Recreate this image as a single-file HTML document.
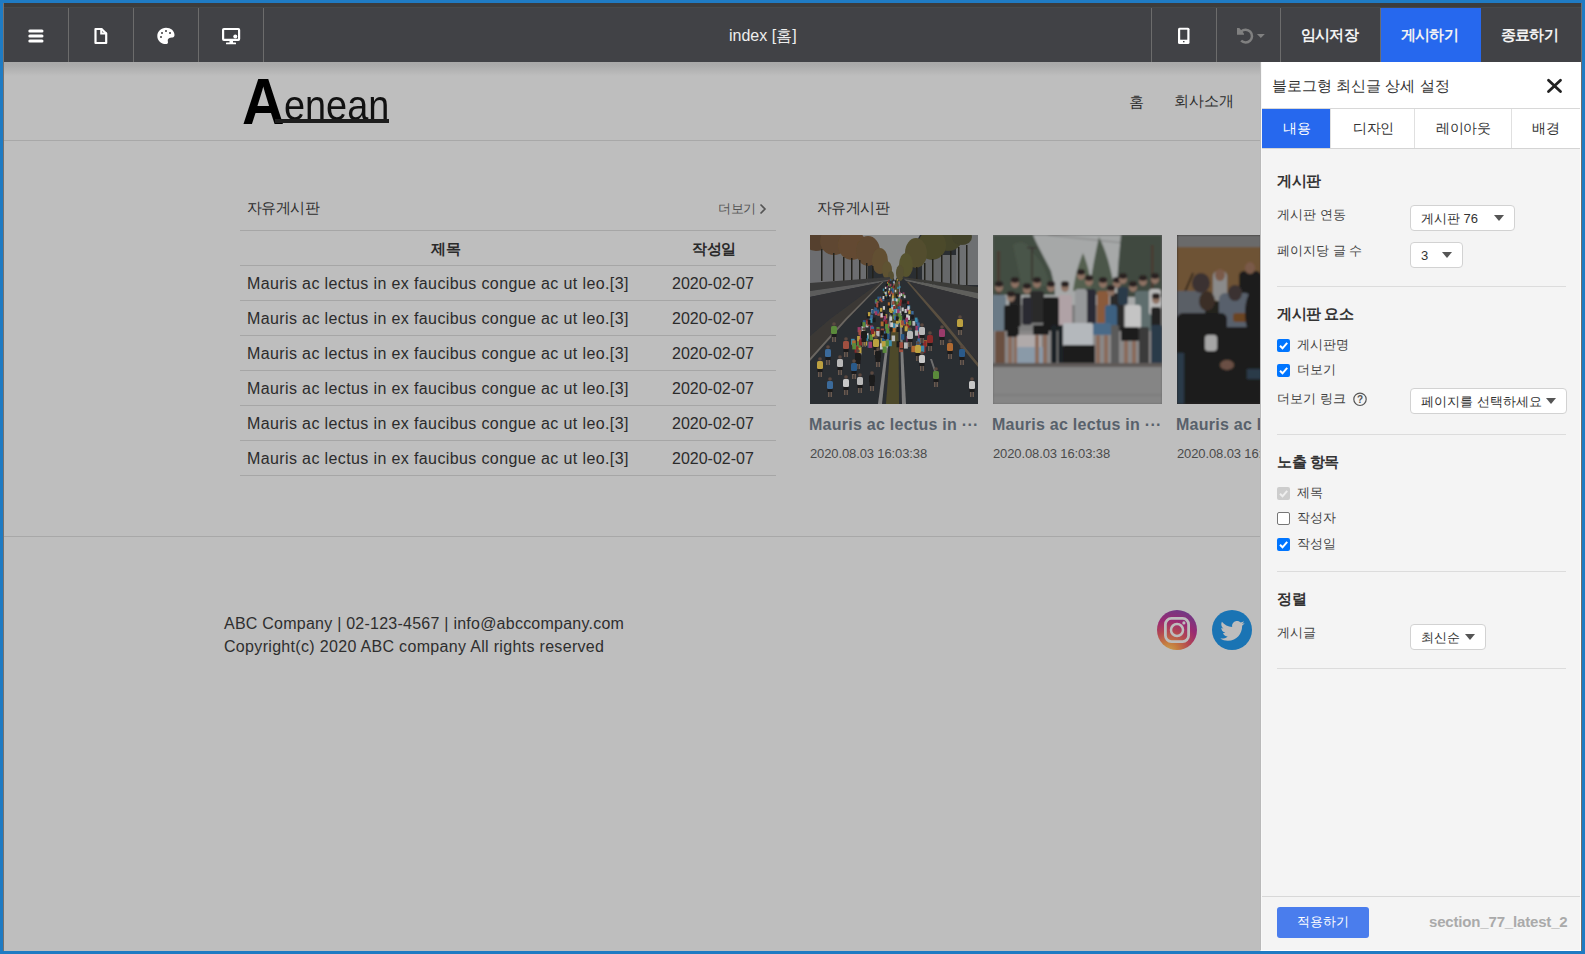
<!DOCTYPE html>
<html><head><meta charset="utf-8">
<style>
*{margin:0;padding:0;box-sizing:border-box}
html,body{width:1585px;height:954px;overflow:hidden;background:#1f7bc3;font-family:"Liberation Sans",sans-serif}
.a{position:absolute}
.dv{position:absolute;top:8px;width:1px;height:54px;background:#6c6c6c}
.hb{position:absolute;top:8px;height:54px;color:#f2f2f2;font-size:15px;font-weight:bold;line-height:54px;text-align:center;letter-spacing:-0.8px}
.t{position:absolute;white-space:nowrap;line-height:1}
.ln{position:absolute;height:1px;background:#a6a6a6}
.row{position:absolute;left:247px;letter-spacing:0.38px;font-size:16px;color:#2b2b2b;white-space:nowrap;line-height:1}
.dt{position:absolute;left:672px;font-size:16px;color:#2b2b2b;white-space:nowrap;line-height:1}
.pl{position:absolute;height:1px;background:#dcdcdc;left:1277px;width:289px}
.ph{position:absolute;left:1277px;letter-spacing:-0.5px;font-size:15px;font-weight:bold;color:#333;line-height:1;white-space:nowrap}
.lb{position:absolute;font-size:13px;color:#444;line-height:1;white-space:nowrap}
.sel{position:absolute;background:#fff;border:1px solid #d2d2d2;border-radius:4px;font-size:13px;color:#333;line-height:1;white-space:nowrap}
.sel span{position:absolute;left:10px;top:6px}
.arr{position:absolute;width:0;height:0;border-left:5px solid transparent;border-right:5px solid transparent;border-top:6px solid #555}
.cb{position:absolute;width:13px;height:13px;border-radius:2px;background:#0075ff}
.cb svg{position:absolute;left:0;top:0}
</style></head>
<body>
<!-- top strip -->
<div class="a" style="left:3px;top:3px;width:1578px;height:4px;background:#3c3c3c"></div>
<div class="a" style="left:3px;top:7px;width:1578px;height:1px;background:#474948"></div>
<div class="a" style="left:3px;top:8px;width:1578px;height:54px;background:#414246"></div>
<div class="dv" style="left:68px"></div>
<div class="dv" style="left:133px"></div>
<div class="dv" style="left:198px"></div>
<div class="dv" style="left:263px"></div>
<div class="dv" style="left:1151px"></div>
<div class="dv" style="left:1216px"></div>
<div class="dv" style="left:1280px"></div>
<div class="dv" style="left:1380px"></div>
<div class="a" style="left:1381px;top:8px;width:100px;height:54px;background:#2668ee"></div>
<div class="hb" style="left:1279.5px;width:100px">임시저장</div>
<div class="hb" style="left:1379.5px;width:100px">게시하기</div>
<div class="hb" style="left:1479.5px;width:100px">종료하기</div>
<div class="t" style="left:729px;top:28px;font-size:16px;color:#eee;letter-spacing:0px">index [홈]</div>
<!-- header icons -->
<svg class="a" style="left:0;top:0" width="300" height="62">
  <g stroke="#fff" stroke-width="3" stroke-linecap="round">
    <line x1="29.8" y1="30.9" x2="42" y2="30.9"/>
    <line x1="29.8" y1="36" x2="42" y2="36"/>
    <line x1="29.8" y1="40.9" x2="42" y2="40.9"/>
  </g>
  <path d="M95.5,29 H101.5 L106.2,33.5 V43 H95.5 Z" fill="none" stroke="#fff" stroke-width="2.2" stroke-linejoin="round"/>
  <path d="M101.2,28 V33.6 H107" fill="none" stroke="#fff" stroke-width="2"/>
  <path d="M166,27.8 C171,27.8 174.5,31 174.5,35 C174.5,38 171,37.5 169.5,38 C167,39 168,41 168,42.2 C168,43.5 167,44.1 165.8,44.1 C161,44.1 157.3,40.5 157.3,36 C157.3,31.5 161,27.8 166,27.8 Z" fill="#fff"/>
  <g fill="#6e6e70"><rect x="165" y="30" width="2" height="2"/><rect x="161" y="32" width="2" height="2"/><rect x="169" y="32" width="2" height="2"/><rect x="160" y="36" width="2" height="2"/></g>
  <rect x="223.1" y="29" width="16" height="10.8" rx="0.8" fill="none" stroke="#fff" stroke-width="2.2"/>
  <rect x="229.5" y="40.5" width="3.5" height="2.5" fill="#fff"/>
  <rect x="226" y="42.4" width="10" height="1.8" rx="0.5" fill="#fff"/>
  <circle cx="235.3" cy="36.4" r="2" fill="#fff"/>
</svg>
<svg class="a" style="left:1170px;top:20px" width="110" height="32">
  <rect x="8" y="7.7" width="11.5" height="16.3" rx="1.5" fill="#fff"/>
  <rect x="10.2" y="9.7" width="7.1" height="10" fill="#414246"/>
  <rect x="13" y="21" width="1.5" height="1.3" fill="#414246"/>
  <path d="M71.24,11.42 A6.4,6.4 0 1 1 71.15,20.7" fill="none" stroke="#808080" stroke-width="2.5"/>
  <path d="M67,8 H69.3 L74,13.6 V14.8 H67 Z" fill="#808080"/>
  <path d="M86.9,13.9 H94.8 L90.85,17.9 Z" fill="#808080"/>
</svg>

<!-- canvas -->
<div class="a" style="left:3px;top:62px;width:1258px;height:889px;background:#bebebe;overflow:hidden">
  <div class="a" style="left:0;top:0;width:1258px;height:14px;background:linear-gradient(#a9a9a9 0px,#aaaaaa 3px,#b3b3b3 8px,#bebebe 14px)"></div>
</div>
<!-- logo -->
<div class="t" id="lgA" style="left:242px;top:70px;font-size:64px;font-weight:bold;color:#000;transform:scaleX(0.92);transform-origin:0 0">A</div>
<div class="t" id="lgE" style="left:284px;top:83.5px;font-size:43px;color:#111;transform:scaleX(0.88);transform-origin:0 0">enean</div>
<div class="a" id="lgU" style="left:275px;top:119px;width:114px;height:4px;background:#1e1e1e"></div>
<div class="t" style="left:1129px;top:94px;font-size:15px;color:#2e2e2e">홈</div>
<div class="t" style="left:1174px;top:93px;font-size:15px;color:#2e2e2e;letter-spacing:0px">회사소개</div>
<div class="ln" style="left:3px;top:140px;width:1258px;background:#a8a8a8"></div>

<!-- board -->
<div class="t" style="left:247px;top:200px;font-size:15px;color:#2e2e2e;letter-spacing:-0.6px">자유게시판</div>
<div class="t" style="left:718px;top:202px;font-size:13px;color:#555;letter-spacing:-0.5px">더보기</div>
<svg class="a" style="left:758px;top:202px" width="12" height="14"><path d="M2.5,2.5 L7,7 L2.5,11.5" fill="none" stroke="#555" stroke-width="1.6"/></svg>
<div class="ln" style="left:240px;top:230px;width:536px"></div>
<div class="t" style="left:431px;top:241px;font-size:15px;font-weight:bold;color:#2a2a2a;letter-spacing:-0.5px">제목</div>
<div class="t" style="left:692px;top:241px;font-size:15px;font-weight:bold;color:#2a2a2a;letter-spacing:-0.5px">작성일</div>
<div class="ln" style="left:240px;top:265px;width:536px"></div>
<div class="row" style="top:276px">Mauris ac lectus in ex faucibus congue ac ut leo.[3]</div><div class="dt" style="top:276px">2020-02-07</div>
<div class="ln" style="left:240px;top:300px;width:536px"></div>
<div class="row" style="top:311px">Mauris ac lectus in ex faucibus congue ac ut leo.[3]</div><div class="dt" style="top:311px">2020-02-07</div>
<div class="ln" style="left:240px;top:335px;width:536px"></div>
<div class="row" style="top:346px">Mauris ac lectus in ex faucibus congue ac ut leo.[3]</div><div class="dt" style="top:346px">2020-02-07</div>
<div class="ln" style="left:240px;top:370px;width:536px"></div>
<div class="row" style="top:381px">Mauris ac lectus in ex faucibus congue ac ut leo.[3]</div><div class="dt" style="top:381px">2020-02-07</div>
<div class="ln" style="left:240px;top:405px;width:536px"></div>
<div class="row" style="top:416px">Mauris ac lectus in ex faucibus congue ac ut leo.[3]</div><div class="dt" style="top:416px">2020-02-07</div>
<div class="ln" style="left:240px;top:440px;width:536px"></div>
<div class="row" style="top:451px">Mauris ac lectus in ex faucibus congue ac ut leo.[3]</div><div class="dt" style="top:451px">2020-02-07</div>
<div class="ln" style="left:240px;top:475px;width:536px"></div>

<!-- gallery -->
<div class="t" style="left:817px;top:200px;font-size:15px;color:#2e2e2e;letter-spacing:-0.6px">자유게시판</div>
<div id="img1" class="a" style="left:810px;top:235px;width:168px;height:169px;background:#2f3034;overflow:hidden"><svg width="168" height="169" viewBox="0 0 168 169"><defs><filter id="b1" x="0" y="0" width="1" height="1"><feGaussianBlur stdDeviation="0.6"/></filter></defs><g filter="url(#b1)"><rect width="168" height="169" fill="#2b2d31"/><polygon points="50,0 110,0 100,18 90,36 85,46 80,36 70,18" fill="#8a8c8c"/><rect x="0" y="12" width="58" height="36" fill="#6c6d6f"/><rect x="112" y="20" width="56" height="30" fill="#66676a"/><rect x="146" y="0" width="22" height="50" fill="#6e7072"/><ellipse cx="6" cy="4" rx="14" ry="12" fill="#54402e"/><ellipse cx="24" cy="6" rx="14" ry="14" fill="#5e4630"/><ellipse cx="42" cy="10" rx="14" ry="15" fill="#644a30"/><ellipse cx="58" cy="16" rx="12" ry="15" fill="#604830"/><ellipse cx="70" cy="26" rx="8" ry="13" fill="#625032"/><ellipse cx="77" cy="35" rx="5" ry="9" fill="#5e5232"/><ellipse cx="81" cy="41" rx="3" ry="5" fill="#565032"/><ellipse cx="138" cy="4" rx="14" ry="12" fill="#44442c"/><ellipse cx="122" cy="10" rx="14" ry="15" fill="#4c4a2c"/><ellipse cx="106" cy="18" rx="11" ry="15" fill="#524e2e"/><ellipse cx="96" cy="30" rx="7" ry="12" fill="#56522f"/><ellipse cx="90" cy="38" rx="4" ry="8" fill="#545030"/><ellipse cx="152" cy="2" rx="10" ry="8" fill="#42422c"/><rect x="11" y="14" width="1.5" height="32" fill="#24221c"/><rect x="23" y="18" width="1.5" height="28" fill="#24221c"/><rect x="33" y="22" width="1.5" height="24" fill="#24221c"/><rect x="41" y="23" width="1.5" height="23" fill="#24221c"/><rect x="49" y="25" width="1.5" height="21" fill="#24221c"/><rect x="56" y="28" width="1.5" height="18" fill="#24221c"/><rect x="62" y="31" width="1.5" height="15" fill="#24221c"/><rect x="106" y="32" width="1.5" height="18" fill="#24221c"/><rect x="114" y="28" width="1.5" height="22" fill="#24221c"/><rect x="122" y="24" width="1.5" height="26" fill="#24221c"/><rect x="131" y="20" width="1.5" height="30" fill="#24221c"/><rect x="140" y="16" width="1.5" height="34" fill="#24221c"/><rect x="148" y="12" width="1.5" height="38" fill="#24221c"/><rect x="156" y="10" width="1.5" height="40" fill="#24221c"/><polygon points="0,48 80,42 80,44.5 0,56" fill="#3a3a3a"/><polygon points="0,56 80,44.5 78,46 0,62" fill="#5c5c5c"/><polygon points="0,62 78,46 70,47 20,84 0,101" fill="#303236"/><polygon points="70,47 72,47 36,84 0,124 0,101 20,84" fill="#3a3836"/><polygon points="72,47 73.5,47 37.5,84 0,126 0,123 35,84" fill="#6a6660"/><polygon points="92,42 168,52 168,58 94,44" fill="#3a3a38"/><polygon points="94,44 168,58 168,64 96,46" fill="#5e5e5c"/><polygon points="96,46 168,64 168,126 158,116 131,84 100,47" fill="#303236"/><polygon points="97,47 99,47 132,84 168,128 168,132 130,86" fill="#5a5040"/><polygon points="85,46 88,46 89,169 76,169" fill="#4e4a2a"/><polygon points="84,46 85,46 72,169 68,169" fill="#7e7e7e"/><polygon points="88.5,46 89.5,46 96,169 92,169" fill="#7e7e7e"/><polygon points="50,118 52,118 44,140 42,140" fill="#6e6e6e"/><polygon points="120,124 122,124 128,142 126,142" fill="#6e6e6e"/><rect x="82.4" y="74.8" width="2.4" height="3.9" fill="#bca040"/><rect x="80.1" y="75.7" width="2.4" height="4.0" fill="#1a1a1a"/><rect x="89.0" y="56.9" width="1.6" height="2.7" fill="#9a3a6a"/><rect x="95.2" y="86.8" width="2.9" height="4.7" fill="#8a2a2a"/><rect x="64.5" y="74.4" width="2.4" height="3.9" fill="#c8c8c8"/><rect x="90.9" y="99.1" width="3.4" height="5.6" fill="#2a5a8a"/><rect x="73.2" y="84.5" width="2.8" height="4.6" fill="#9a3a6a"/><rect x="85.2" y="88.5" width="3.0" height="4.9" fill="#b8b8b8"/><rect x="97.3" y="86.4" width="2.9" height="4.7" fill="#8a2a2a"/><rect x="78.1" y="48.0" width="1.3" height="2.1" fill="#5a8a3a"/><rect x="93.9" y="84.8" width="2.8" height="4.6" fill="#1c1c1c"/><rect x="94.5" y="74.0" width="2.4" height="3.9" fill="#c8c8c8"/><rect x="75.7" y="59.9" width="1.8" height="2.9" fill="#2a5a8a"/><rect x="75.8" y="89.0" width="3.0" height="4.9" fill="#b06a30"/><rect x="82.2" y="71.7" width="2.3" height="3.7" fill="#8a2a2a"/><rect x="66.5" y="92.1" width="3.1" height="5.1" fill="#5a8a3a"/><rect x="56.9" y="78.9" width="2.6" height="4.2" fill="#1a1a1a"/><rect x="71.0" y="96.1" width="3.3" height="5.4" fill="#b06a30"/><rect x="98.0" y="70.3" width="2.2" height="3.6" fill="#3a8aaa"/><rect x="80.1" y="44.0" width="1.1" height="1.8" fill="#2a5a8a"/><rect x="101.2" y="76.0" width="2.4" height="4.0" fill="#3a6a9a"/><rect x="82.8" y="72.5" width="2.3" height="3.8" fill="#5a8a3a"/><rect x="62.0" y="96.9" width="3.3" height="5.4" fill="#8a2a2a"/><rect x="64.8" y="65.2" width="2.0" height="3.3" fill="#3a6a9a"/><rect x="52.4" y="95.5" width="3.3" height="5.3" fill="#5a8a3a"/><rect x="47.6" y="92.1" width="3.1" height="5.1" fill="#9a3a6a"/><rect x="55.2" y="98.2" width="3.4" height="5.5" fill="#c8c8c8"/><rect x="81.9" y="56.8" width="1.6" height="2.7" fill="#a05040"/><rect x="72.2" y="96.3" width="3.3" height="5.4" fill="#3a6a9a"/><rect x="80.7" y="51.9" width="1.4" height="2.3" fill="#5a8a3a"/><rect x="86.7" y="44.0" width="1.1" height="1.8" fill="#bca040"/><rect x="105.7" y="84.3" width="2.8" height="4.6" fill="#2a5a8a"/><rect x="78.8" y="58.3" width="1.7" height="2.8" fill="#1a1a1a"/><rect x="55.5" y="87.6" width="2.9" height="4.8" fill="#b8b8b8"/><rect x="75.3" y="58.5" width="1.7" height="2.8" fill="#bca040"/><rect x="96.9" y="85.5" width="2.8" height="4.7" fill="#3a6a9a"/><rect x="76.2" y="49.0" width="1.3" height="2.1" fill="#1a1a1a"/><rect x="50.9" y="87.3" width="2.9" height="4.8" fill="#1c1c1c"/><rect x="78.6" y="69.3" width="2.2" height="3.5" fill="#1a1a1a"/><rect x="83.0" y="76.9" width="2.5" height="4.1" fill="#3a6a9a"/><rect x="73.6" y="56.4" width="1.6" height="2.7" fill="#5a8a3a"/><rect x="59.6" y="99.6" width="3.4" height="5.6" fill="#5a8a3a"/><rect x="84.7" y="54.8" width="1.6" height="2.5" fill="#c8c8c8"/><rect x="92.7" y="57.4" width="1.7" height="2.7" fill="#9a3a6a"/><rect x="74.5" y="85.0" width="2.8" height="4.6" fill="#8a2a2a"/><rect x="82.5" y="51.4" width="1.4" height="2.3" fill="#b06a30"/><rect x="87.0" y="60.2" width="1.8" height="2.9" fill="#b06a30"/><rect x="96.7" y="72.6" width="2.3" height="3.8" fill="#9a3a6a"/><rect x="70.7" y="64.0" width="1.9" height="3.2" fill="#a05040"/><rect x="45.4" y="110.4" width="3.9" height="6.4" fill="#9a3a6a"/><rect x="97.2" y="82.0" width="2.7" height="4.4" fill="#1a1a1a"/><rect x="78.0" y="49.0" width="1.3" height="2.1" fill="#5a8a3a"/><rect x="49.6" y="94.9" width="3.2" height="5.3" fill="#3a6a9a"/><rect x="61.0" y="74.3" width="2.4" height="3.9" fill="#b8b8b8"/><rect x="82.0" y="63.2" width="1.9" height="3.1" fill="#b8b8b8"/><rect x="76.3" y="50.3" width="1.4" height="2.2" fill="#9a3a6a"/><rect x="89.1" y="110.7" width="3.9" height="6.4" fill="#a05040"/><rect x="101.1" y="79.5" width="2.6" height="4.2" fill="#1a1a1a"/><rect x="76.7" y="46.4" width="1.2" height="2.0" fill="#1c1c1c"/><rect x="106.7" y="91.7" width="3.1" height="5.1" fill="#2a5a8a"/><rect x="55.7" y="84.7" width="2.8" height="4.6" fill="#8a2a2a"/><rect x="66.3" y="93.7" width="3.2" height="5.2" fill="#8a2a2a"/><rect x="83.2" y="49.1" width="1.3" height="2.2" fill="#a05040"/><rect x="88.5" y="47.0" width="1.2" height="2.0" fill="#a05040"/><rect x="96.3" y="91.9" width="3.1" height="5.1" fill="#1c1c1c"/><rect x="87.2" y="67.9" width="2.1" height="3.4" fill="#8a2a2a"/><rect x="70.7" y="103.2" width="3.6" height="5.9" fill="#bca040"/><rect x="82.8" y="46.1" width="1.2" height="1.9" fill="#2a5a8a"/><rect x="72.0" y="86.5" width="2.9" height="4.7" fill="#1a1a1a"/><rect x="78.2" y="44.8" width="1.1" height="1.9" fill="#8a2a2a"/><rect x="106.8" y="87.5" width="2.9" height="4.8" fill="#3a6a9a"/><rect x="70.8" y="93.5" width="3.2" height="5.2" fill="#a05040"/><rect x="75.5" y="91.2" width="3.1" height="5.0" fill="#9a3a6a"/><rect x="47.1" y="101.0" width="3.5" height="5.7" fill="#bca040"/><rect x="70.3" y="79.0" width="2.6" height="4.2" fill="#8a2a2a"/><rect x="67.3" y="76.7" width="2.5" height="4.1" fill="#a05040"/><rect x="87.3" y="51.7" width="1.4" height="2.3" fill="#3a8aaa"/><rect x="57.5" y="106.6" width="3.7" height="6.1" fill="#2a5a8a"/><rect x="67.1" y="69.0" width="2.2" height="3.5" fill="#1a1a1a"/><rect x="73.3" y="57.8" width="1.7" height="2.7" fill="#1c1c1c"/><rect x="75.0" y="88.9" width="3.0" height="4.9" fill="#5a8a3a"/><rect x="86.4" y="66.2" width="2.0" height="3.3" fill="#5a8a3a"/><rect x="95.9" y="87.1" width="2.9" height="4.8" fill="#bca040"/><rect x="106.1" y="106.2" width="3.7" height="6.1" fill="#3a6a9a"/><rect x="92.5" y="58.9" width="1.7" height="2.8" fill="#5a8a3a"/><rect x="82.0" y="53.3" width="1.5" height="2.4" fill="#2a5a8a"/><rect x="106.2" y="92.4" width="3.1" height="5.1" fill="#b06a30"/><rect x="49.8" y="99.9" width="3.5" height="5.6" fill="#9a3a6a"/><rect x="72.4" y="62.7" width="1.9" height="3.1" fill="#3a6a9a"/><rect x="81.1" y="70.0" width="2.2" height="3.6" fill="#3a8aaa"/><rect x="92.1" y="65.4" width="2.0" height="3.3" fill="#1a1a1a"/><rect x="61.3" y="74.8" width="2.4" height="3.9" fill="#2a5a8a"/><rect x="84.3" y="62.9" width="1.9" height="3.1" fill="#3a8aaa"/><rect x="82.4" y="92.2" width="3.1" height="5.1" fill="#b06a30"/><rect x="82.2" y="88.2" width="3.0" height="4.8" fill="#3a8aaa"/><rect x="81.1" y="53.2" width="1.5" height="2.4" fill="#2a5a8a"/><rect x="62.0" y="96.3" width="3.3" height="5.4" fill="#bca040"/><rect x="72.8" y="53.6" width="1.5" height="2.5" fill="#3a8aaa"/><rect x="74.9" y="51.8" width="1.4" height="2.3" fill="#c8c8c8"/><rect x="96.4" y="88.5" width="3.0" height="4.9" fill="#8a2a2a"/><rect x="60.0" y="90.5" width="3.1" height="5.0" fill="#9a3a6a"/><rect x="87.4" y="61.4" width="1.8" height="3.0" fill="#bca040"/><rect x="89.3" y="76.1" width="2.5" height="4.0" fill="#b8b8b8"/><rect x="88.9" y="59.4" width="1.7" height="2.9" fill="#c8c8c8"/><rect x="79.4" y="91.4" width="3.1" height="5.1" fill="#1a1a1a"/><rect x="47.5" y="111.8" width="4.0" height="6.5" fill="#bca040"/><rect x="61.0" y="91.6" width="3.1" height="5.1" fill="#3a6a9a"/><rect x="94.0" y="107.4" width="3.8" height="6.2" fill="#b8b8b8"/><rect x="66.7" y="74.6" width="2.4" height="3.9" fill="#2a5a8a"/><rect x="83.0" y="69.6" width="2.2" height="3.6" fill="#c8c8c8"/><rect x="108.1" y="98.2" width="3.4" height="5.5" fill="#9a3a6a"/><rect x="97.2" y="66.2" width="2.0" height="3.3" fill="#8a2a2a"/><rect x="98.1" y="93.1" width="3.2" height="5.2" fill="#3a8aaa"/><rect x="47.0" y="106.8" width="3.7" height="6.1" fill="#5a8a3a"/><rect x="113.5" y="105.2" width="3.7" height="6.0" fill="#b06a30"/><rect x="93.7" y="80.5" width="2.6" height="4.3" fill="#1c1c1c"/><rect x="87.6" y="61.8" width="1.8" height="3.0" fill="#2a5a8a"/><rect x="65.6" y="67.7" width="2.1" height="3.4" fill="#9a3a6a"/><rect x="77.8" y="67.3" width="2.1" height="3.4" fill="#b06a30"/><rect x="57.9" y="77.1" width="2.5" height="4.1" fill="#bca040"/><rect x="71.7" y="103.0" width="3.6" height="5.9" fill="#2a5a8a"/><rect x="78.0" y="55.8" width="1.6" height="2.6" fill="#bca040"/><rect x="74.3" y="106.3" width="3.7" height="6.1" fill="#c8c8c8"/><rect x="78.1" y="105.2" width="3.7" height="6.0" fill="#3a8aaa"/><rect x="105.4" y="90.9" width="3.1" height="5.0" fill="#9a3a6a"/><rect x="88.9" y="83.4" width="2.8" height="4.5" fill="#bca040"/><rect x="82.2" y="59.1" width="1.7" height="2.8" fill="#b06a30"/><rect x="81.6" y="100.5" width="3.5" height="5.7" fill="#b8b8b8"/><rect x="96.1" y="79.5" width="2.6" height="4.2" fill="#c8c8c8"/><rect x="86.2" y="61.4" width="1.8" height="3.0" fill="#1a1a1a"/><rect x="90.5" y="58.2" width="1.7" height="2.8" fill="#c8c8c8"/><rect x="82.9" y="79.6" width="2.6" height="4.3" fill="#5a8a3a"/><rect x="64.5" y="72.0" width="2.3" height="3.7" fill="#2a5a8a"/><rect x="52.9" y="85.2" width="2.8" height="4.6" fill="#2a5a8a"/><rect x="74.6" y="79.1" width="2.6" height="4.2" fill="#bca040"/><rect x="44.6" y="111.3" width="3.9" height="6.4" fill="#8a2a2a"/><rect x="51.6" y="91.0" width="3.1" height="5.0" fill="#c8c8c8"/><rect x="98.3" y="75.2" width="2.4" height="3.9" fill="#bca040"/><rect x="58.5" y="106.8" width="3.7" height="6.1" fill="#9a3a6a"/><rect x="72.1" y="77.5" width="2.5" height="4.1" fill="#9a3a6a"/><rect x="60.2" y="79.7" width="2.6" height="4.3" fill="#3a6a9a"/><rect x="102.4" y="86.0" width="2.9" height="4.7" fill="#b8b8b8"/><rect x="107.7" y="91.7" width="3.1" height="5.1" fill="#2a5a8a"/><rect x="75.0" y="57.2" width="1.7" height="2.7" fill="#3a8aaa"/><rect x="87.9" y="63.3" width="1.9" height="3.1" fill="#5a8a3a"/><rect x="56.6" y="86.1" width="2.9" height="4.7" fill="#a05040"/><rect x="97.6" y="83.6" width="2.8" height="4.5" fill="#1a1a1a"/><rect x="72.6" y="61.0" width="1.8" height="3.0" fill="#c8c8c8"/><rect x="41.1" y="103.8" width="3.6" height="5.9" fill="#3a8aaa"/><rect x="81.3" y="72.1" width="2.3" height="3.7" fill="#b8b8b8"/><rect x="97.4" y="80.6" width="2.6" height="4.3" fill="#c8c8c8"/><rect x="80.2" y="87.4" width="2.9" height="4.8" fill="#c8c8c8"/><rect x="98.4" y="85.6" width="2.8" height="4.7" fill="#5a8a3a"/><rect x="86.5" y="106.2" width="3.7" height="6.1" fill="#1c1c1c"/><rect x="62.5" y="105.4" width="3.7" height="6.0" fill="#1c1c1c"/><rect x="53.6" y="104.6" width="3.6" height="6.0" fill="#bca040"/><rect x="108.5" y="111.9" width="4.0" height="6.5" fill="#b8b8b8"/><rect x="48.9" y="104.5" width="3.6" height="6.0" fill="#8a2a2a"/><rect x="69.4" y="61.6" width="1.8" height="3.0" fill="#3a6a9a"/><rect x="89.5" y="80.9" width="2.7" height="4.3" fill="#5a8a3a"/><rect x="87.6" y="71.4" width="2.3" height="3.7" fill="#2a5a8a"/><rect x="83.5" y="50.5" width="1.4" height="2.2" fill="#1c1c1c"/><rect x="112.9" y="106.0" width="3.7" height="6.1" fill="#8a2a2a"/><rect x="86.4" y="91.9" width="3.1" height="5.1" fill="#1c1c1c"/><rect x="88.2" y="78.2" width="2.5" height="4.2" fill="#5a8a3a"/><rect x="76.1" y="98.6" width="3.4" height="5.6" fill="#2a5a8a"/><rect x="83.4" y="46.5" width="1.2" height="2.0" fill="#c8c8c8"/><rect x="75.2" y="105.5" width="3.7" height="6.0" fill="#5a8a3a"/><rect x="74.7" y="56.5" width="1.6" height="2.7" fill="#b8b8b8"/><rect x="111.6" y="111.3" width="3.9" height="6.4" fill="#8a2a2a"/><rect x="59.6" y="83.4" width="2.8" height="4.5" fill="#3a8aaa"/><rect x="91.5" y="75.4" width="2.4" height="4.0" fill="#1c1c1c"/><rect x="77.4" y="70.6" width="2.2" height="3.6" fill="#1c1c1c"/><rect x="84.2" y="73.2" width="2.3" height="3.8" fill="#2a5a8a"/><rect x="52.4" y="87.1" width="2.9" height="4.8" fill="#5a8a3a"/><rect x="80.7" y="56.3" width="1.6" height="2.6" fill="#a05040"/><rect x="96.2" y="69.2" width="2.2" height="3.5" fill="#1a1a1a"/><rect x="82.1" y="55.2" width="1.6" height="2.6" fill="#2a5a8a"/><rect x="66.6" y="66.0" width="2.0" height="3.3" fill="#a05040"/><rect x="107.4" y="103.5" width="3.6" height="5.9" fill="#3a6a9a"/><rect x="62.9" y="82.7" width="2.7" height="4.5" fill="#1a1a1a"/><rect x="101.3" y="110.8" width="3.9" height="6.4" fill="#b06a30"/><rect x="69.3" y="63.0" width="1.9" height="3.1" fill="#a05040"/><rect x="98.8" y="96.9" width="3.3" height="5.4" fill="#3a6a9a"/><rect x="78.7" y="53.1" width="1.5" height="2.4" fill="#c8c8c8"/><rect x="94.6" y="91.2" width="3.1" height="5.1" fill="#bca040"/><rect x="74.9" y="56.3" width="1.6" height="2.6" fill="#b8b8b8"/><rect x="80.1" y="48.8" width="1.3" height="2.1" fill="#9a3a6a"/><rect x="89.1" y="50.9" width="1.4" height="2.3" fill="#3a8aaa"/><rect x="42.1" y="105.4" width="3.7" height="6.0" fill="#b06a30"/><rect x="89.7" y="108.2" width="3.8" height="6.2" fill="#1c1c1c"/><rect x="79.0" y="58.7" width="1.7" height="2.8" fill="#b8b8b8"/><rect x="73.8" y="80.2" width="2.6" height="4.3" fill="#9a3a6a"/><rect x="90.1" y="87.7" width="2.9" height="4.8" fill="#bca040"/><rect x="83.2" y="70.9" width="2.2" height="3.7" fill="#8a2a2a"/><rect x="92.0" y="85.8" width="2.9" height="4.7" fill="#b06a30"/><rect x="80.1" y="74.2" width="2.4" height="3.9" fill="#bca040"/><rect x="78.6" y="57.3" width="1.7" height="2.7" fill="#8a2a2a"/><rect x="74.7" y="61.6" width="1.8" height="3.0" fill="#1c1c1c"/><rect x="79.5" y="81.4" width="2.7" height="4.4" fill="#c8c8c8"/><rect x="104.8" y="82.6" width="2.7" height="4.5" fill="#3a8aaa"/><rect x="86.1" y="74.2" width="2.4" height="3.9" fill="#c8c8c8"/><rect x="92.9" y="84.6" width="2.8" height="4.6" fill="#2a5a8a"/><rect x="97.2" y="70.3" width="2.2" height="3.6" fill="#3a6a9a"/><rect x="64.8" y="76.1" width="2.4" height="4.0" fill="#9a3a6a"/><rect x="84.0" y="80.9" width="2.6" height="4.3" fill="#3a6a9a"/><rect x="70.0" y="108.3" width="3.8" height="6.2" fill="#c8c8c8"/><rect x="72.8" y="71.1" width="2.2" height="3.7" fill="#c8c8c8"/><rect x="85.8" y="63.4" width="1.9" height="3.1" fill="#c8c8c8"/><rect x="89.4" y="107.2" width="3.8" height="6.1" fill="#a05040"/><rect x="65.4" y="64.1" width="1.9" height="3.2" fill="#5a8a3a"/><rect x="86.0" y="83.8" width="2.8" height="4.5" fill="#3a6a9a"/><rect x="70.5" y="95.3" width="3.3" height="5.3" fill="#1c1c1c"/><rect x="48.4" y="94.9" width="3.2" height="5.3" fill="#a05040"/><rect x="42.3" y="108.2" width="3.8" height="6.2" fill="#5a8a3a"/><rect x="79.1" y="73.2" width="2.3" height="3.8" fill="#bca040"/><rect x="81.9" y="60.6" width="1.8" height="2.9" fill="#bca040"/><rect x="75.9" y="93.1" width="3.2" height="5.2" fill="#5a8a3a"/><rect x="57.7" y="85.0" width="2.8" height="4.6" fill="#1a1a1a"/><rect x="64.5" y="72.4" width="2.3" height="3.8" fill="#2a5a8a"/><rect x="67.9" y="68.3" width="2.1" height="3.5" fill="#1c1c1c"/><rect x="87.1" y="74.1" width="2.4" height="3.9" fill="#9a3a6a"/><rect x="86.4" y="84.9" width="2.8" height="4.6" fill="#3a8aaa"/><rect x="91.5" y="72.5" width="2.3" height="3.8" fill="#c8c8c8"/><rect x="51.8" y="99.4" width="3.4" height="5.6" fill="#b06a30"/><rect x="61.0" y="93.9" width="3.2" height="5.2" fill="#8a2a2a"/><rect x="70.4" y="78.2" width="2.5" height="4.2" fill="#c8c8c8"/><rect x="70.7" y="86.5" width="2.9" height="4.7" fill="#b06a30"/><rect x="91.1" y="85.5" width="2.8" height="4.7" fill="#a05040"/><rect x="86.0" y="84.2" width="2.8" height="4.6" fill="#bca040"/><rect x="93.8" y="60.3" width="1.8" height="2.9" fill="#c8c8c8"/><rect x="110.4" y="110.6" width="3.9" height="6.4" fill="#3a8aaa"/><rect x="77.0" y="46.7" width="1.2" height="2.0" fill="#b06a30"/><rect x="67.4" y="61.6" width="1.8" height="3.0" fill="#2a5a8a"/><rect x="83.0" y="51.0" width="1.4" height="2.3" fill="#8a2a2a"/><rect x="104.9" y="95.4" width="3.3" height="5.3" fill="#b8b8b8"/><rect x="85.8" y="81.4" width="2.7" height="4.4" fill="#1c1c1c"/><rect x="72.9" y="76.9" width="2.5" height="4.1" fill="#1c1c1c"/><rect x="89.3" y="67.4" width="2.1" height="3.4" fill="#8a2a2a"/><rect x="73.7" y="98.6" width="3.4" height="5.6" fill="#1a1a1a"/><rect x="96.5" y="101.0" width="3.5" height="5.7" fill="#9a3a6a"/><rect x="70.0" y="72.9" width="2.3" height="3.8" fill="#bca040"/><rect x="74.6" y="54.2" width="1.5" height="2.5" fill="#1a1a1a"/><rect x="82.4" y="66.1" width="2.0" height="3.3" fill="#a05040"/><rect x="54.7" y="100.2" width="3.5" height="5.7" fill="#3a8aaa"/><rect x="65.4" y="69.1" width="2.2" height="3.5" fill="#1c1c1c"/><rect x="75.9" y="49.3" width="1.3" height="2.2" fill="#1a1a1a"/><rect x="95.4" y="82.6" width="2.7" height="4.5" fill="#9a3a6a"/><rect x="89.8" y="64.3" width="2.0" height="3.2" fill="#8a2a2a"/><rect x="94.4" y="65.1" width="2.0" height="3.3" fill="#1a1a1a"/><rect x="79.3" y="49.6" width="1.3" height="2.2" fill="#a05040"/><rect x="66.2" y="96.0" width="3.3" height="5.4" fill="#b8b8b8"/><rect x="85.6" y="58.9" width="1.7" height="2.8" fill="#1c1c1c"/><rect x="66.2" y="68.9" width="2.1" height="3.5" fill="#a05040"/><rect x="84.0" y="74.0" width="2.4" height="3.9" fill="#3a8aaa"/><rect x="71.8" y="106.1" width="3.7" height="6.1" fill="#bca040"/><rect x="72.6" y="111.5" width="3.9" height="6.4" fill="#5a8a3a"/><rect x="97.4" y="71.2" width="2.2" height="3.7" fill="#c8c8c8"/><rect x="77.3" y="60.9" width="1.8" height="3.0" fill="#1c1c1c"/><rect x="84.9" y="45.6" width="1.2" height="1.9" fill="#1a1a1a"/><ellipse cx="18" cy="112" rx="1.8" ry="1.8" fill="#5a4a40"/><rect x="15" y="114" width="6" height="8" rx="1.5" fill="#3a6a9a"/><rect x="15.5" y="122" width="5" height="3" fill="#1a1a1a"/><rect x="16" y="125" width="1.5" height="5" fill="#6a5a50"/><rect x="18.5" y="125" width="1.5" height="5" fill="#6a5a50"/><ellipse cx="10" cy="124" rx="1.8" ry="1.8" fill="#5a4a40"/><rect x="7" y="126" width="6" height="8" rx="1.5" fill="#bca040"/><rect x="7.5" y="134" width="5" height="3" fill="#1a1a1a"/><rect x="8" y="137" width="1.5" height="5" fill="#6a5a50"/><rect x="10.5" y="137" width="1.5" height="5" fill="#6a5a50"/><ellipse cx="24" cy="89" rx="1.8" ry="1.8" fill="#5a4a40"/><rect x="21" y="91" width="6" height="8" rx="1.5" fill="#5a8a3a"/><rect x="21.5" y="99" width="5" height="3" fill="#1a1a1a"/><rect x="22" y="102" width="1.5" height="5" fill="#6a5a50"/><rect x="24.5" y="102" width="1.5" height="5" fill="#6a5a50"/><ellipse cx="36" cy="104" rx="1.8" ry="1.8" fill="#5a4a40"/><rect x="33" y="106" width="6" height="8" rx="1.5" fill="#a05040"/><rect x="33.5" y="114" width="5" height="3" fill="#1a1a1a"/><rect x="34" y="117" width="1.5" height="5" fill="#6a5a50"/><rect x="36.5" y="117" width="1.5" height="5" fill="#6a5a50"/><ellipse cx="48" cy="116" rx="1.8" ry="1.8" fill="#5a4a40"/><rect x="45" y="118" width="6" height="8" rx="1.5" fill="#1a1a1a"/><rect x="45.5" y="126" width="5" height="3" fill="#1a1a1a"/><rect x="46" y="129" width="1.5" height="5" fill="#6a5a50"/><rect x="48.5" y="129" width="1.5" height="5" fill="#6a5a50"/><ellipse cx="54" cy="94" rx="1.8" ry="1.8" fill="#5a4a40"/><rect x="51" y="96" width="6" height="8" rx="1.5" fill="#1c1c1c"/><rect x="51.5" y="104" width="5" height="3" fill="#1a1a1a"/><rect x="52" y="107" width="1.5" height="5" fill="#6a5a50"/><rect x="54.5" y="107" width="1.5" height="5" fill="#6a5a50"/><ellipse cx="66" cy="102" rx="1.8" ry="1.8" fill="#5a4a40"/><rect x="63" y="104" width="6" height="8" rx="1.5" fill="#bca040"/><rect x="63.5" y="112" width="5" height="3" fill="#1a1a1a"/><rect x="64" y="115" width="1.5" height="5" fill="#6a5a50"/><rect x="66.5" y="115" width="1.5" height="5" fill="#6a5a50"/><ellipse cx="20" cy="144" rx="1.8" ry="1.8" fill="#5a4a40"/><rect x="17" y="146" width="6" height="8" rx="1.5" fill="#3a6a9a"/><rect x="17.5" y="154" width="5" height="3" fill="#1a1a1a"/><rect x="18" y="157" width="1.5" height="5" fill="#6a5a50"/><rect x="20.5" y="157" width="1.5" height="5" fill="#6a5a50"/><ellipse cx="36" cy="142" rx="1.8" ry="1.8" fill="#5a4a40"/><rect x="33" y="144" width="6" height="8" rx="1.5" fill="#c8c8c8"/><rect x="33.5" y="152" width="5" height="3" fill="#1a1a1a"/><rect x="34" y="155" width="1.5" height="5" fill="#6a5a50"/><rect x="36.5" y="155" width="1.5" height="5" fill="#6a5a50"/><ellipse cx="50" cy="140" rx="1.8" ry="1.8" fill="#5a4a40"/><rect x="47" y="142" width="6" height="8" rx="1.5" fill="#b8b8b8"/><rect x="47.5" y="150" width="5" height="3" fill="#1a1a1a"/><rect x="48" y="153" width="1.5" height="5" fill="#6a5a50"/><rect x="50.5" y="153" width="1.5" height="5" fill="#6a5a50"/><ellipse cx="62" cy="138" rx="1.8" ry="1.8" fill="#5a4a40"/><rect x="59" y="140" width="6" height="8" rx="1.5" fill="#1a1a1a"/><rect x="59.5" y="148" width="5" height="3" fill="#1a1a1a"/><rect x="60" y="151" width="1.5" height="5" fill="#6a5a50"/><rect x="62.5" y="151" width="1.5" height="5" fill="#6a5a50"/><ellipse cx="68" cy="114" rx="1.8" ry="1.8" fill="#5a4a40"/><rect x="65" y="116" width="6" height="8" rx="1.5" fill="#1a1a1a"/><rect x="65.5" y="124" width="5" height="3" fill="#1a1a1a"/><rect x="66" y="127" width="1.5" height="5" fill="#6a5a50"/><rect x="68.5" y="127" width="1.5" height="5" fill="#6a5a50"/><ellipse cx="100" cy="94" rx="1.8" ry="1.8" fill="#5a4a40"/><rect x="97" y="96" width="6" height="8" rx="1.5" fill="#b8b8b8"/><rect x="97.5" y="104" width="5" height="3" fill="#1a1a1a"/><rect x="98" y="107" width="1.5" height="5" fill="#6a5a50"/><rect x="100.5" y="107" width="1.5" height="5" fill="#6a5a50"/><ellipse cx="112" cy="90" rx="1.8" ry="1.8" fill="#5a4a40"/><rect x="109" y="92" width="6" height="8" rx="1.5" fill="#b8b8b8"/><rect x="109.5" y="100" width="5" height="3" fill="#1a1a1a"/><rect x="110" y="103" width="1.5" height="5" fill="#6a5a50"/><rect x="112.5" y="103" width="1.5" height="5" fill="#6a5a50"/><ellipse cx="120" cy="98" rx="1.8" ry="1.8" fill="#5a4a40"/><rect x="117" y="100" width="6" height="8" rx="1.5" fill="#8a2a2a"/><rect x="117.5" y="108" width="5" height="3" fill="#1a1a1a"/><rect x="118" y="111" width="1.5" height="5" fill="#6a5a50"/><rect x="120.5" y="111" width="1.5" height="5" fill="#6a5a50"/><ellipse cx="108" cy="108" rx="1.8" ry="1.8" fill="#5a4a40"/><rect x="105" y="110" width="6" height="8" rx="1.5" fill="#bca040"/><rect x="105.5" y="118" width="5" height="3" fill="#1a1a1a"/><rect x="106" y="121" width="1.5" height="5" fill="#6a5a50"/><rect x="108.5" y="121" width="1.5" height="5" fill="#6a5a50"/><ellipse cx="132" cy="92" rx="1.8" ry="1.8" fill="#5a4a40"/><rect x="129" y="94" width="6" height="8" rx="1.5" fill="#9a3a6a"/><rect x="129.5" y="102" width="5" height="3" fill="#1a1a1a"/><rect x="130" y="105" width="1.5" height="5" fill="#6a5a50"/><rect x="132.5" y="105" width="1.5" height="5" fill="#6a5a50"/><ellipse cx="140" cy="106" rx="1.8" ry="1.8" fill="#5a4a40"/><rect x="137" y="108" width="6" height="8" rx="1.5" fill="#b06a30"/><rect x="137.5" y="116" width="5" height="3" fill="#1a1a1a"/><rect x="138" y="119" width="1.5" height="5" fill="#6a5a50"/><rect x="140.5" y="119" width="1.5" height="5" fill="#6a5a50"/><ellipse cx="150" cy="82" rx="1.8" ry="1.8" fill="#5a4a40"/><rect x="147" y="84" width="6" height="8" rx="1.5" fill="#bca040"/><rect x="147.5" y="92" width="5" height="3" fill="#1a1a1a"/><rect x="148" y="95" width="1.5" height="5" fill="#6a5a50"/><rect x="150.5" y="95" width="1.5" height="5" fill="#6a5a50"/><ellipse cx="152" cy="112" rx="1.8" ry="1.8" fill="#5a4a40"/><rect x="149" y="114" width="6" height="8" rx="1.5" fill="#2a5a8a"/><rect x="149.5" y="122" width="5" height="3" fill="#1a1a1a"/><rect x="150" y="125" width="1.5" height="5" fill="#6a5a50"/><rect x="152.5" y="125" width="1.5" height="5" fill="#6a5a50"/><ellipse cx="126" cy="134" rx="1.8" ry="1.8" fill="#5a4a40"/><rect x="123" y="136" width="6" height="8" rx="1.5" fill="#5a8a3a"/><rect x="123.5" y="144" width="5" height="3" fill="#1a1a1a"/><rect x="124" y="147" width="1.5" height="5" fill="#6a5a50"/><rect x="126.5" y="147" width="1.5" height="5" fill="#6a5a50"/><ellipse cx="162" cy="144" rx="1.8" ry="1.8" fill="#5a4a40"/><rect x="159" y="146" width="6" height="8" rx="1.5" fill="#c8c8c8"/><rect x="159.5" y="154" width="5" height="3" fill="#1a1a1a"/><rect x="160" y="157" width="1.5" height="5" fill="#6a5a50"/><rect x="162.5" y="157" width="1.5" height="5" fill="#6a5a50"/><ellipse cx="44" cy="126" rx="1.8" ry="1.8" fill="#5a4a40"/><rect x="41" y="128" width="6" height="8" rx="1.5" fill="#2a5a8a"/><rect x="41.5" y="136" width="5" height="3" fill="#1a1a1a"/><rect x="42" y="139" width="1.5" height="5" fill="#6a5a50"/><rect x="44.5" y="139" width="1.5" height="5" fill="#6a5a50"/><ellipse cx="112" cy="118" rx="1.8" ry="1.8" fill="#5a4a40"/><rect x="109" y="120" width="6" height="8" rx="1.5" fill="#c8c8c8"/><rect x="109.5" y="128" width="5" height="3" fill="#1a1a1a"/><rect x="110" y="131" width="1.5" height="5" fill="#6a5a50"/><rect x="112.5" y="131" width="1.5" height="5" fill="#6a5a50"/><ellipse cx="30" cy="122" rx="1.8" ry="1.8" fill="#5a4a40"/><rect x="27" y="124" width="6" height="8" rx="1.5" fill="#b8b8b8"/><rect x="27.5" y="132" width="5" height="3" fill="#1a1a1a"/><rect x="28" y="135" width="1.5" height="5" fill="#6a5a50"/><rect x="30.5" y="135" width="1.5" height="5" fill="#6a5a50"/></g></svg></div>
<div id="img2" class="a" style="left:993px;top:235px;width:169px;height:169px;background:#6a6a6a;overflow:hidden"><svg width="169" height="169" viewBox="0 0 169 169"><defs><filter id="b2" x="0" y="0" width="1" height="1"><feGaussianBlur stdDeviation="0.8"/></filter></defs><g filter="url(#b2)"><rect width="169" height="169" fill="#7e7e7e"/><rect width="169" height="70" fill="#a6a8a8"/><path d="M0,0 H40 C44,10 52,24 58,36 C60,44 62,52 62,60 H0 Z" fill="#434d42"/><path d="M20,10 C28,4 36,8 40,18 C48,26 54,36 56,50 L30,56 Z" fill="#4a5548"/><rect x="4" y="16" width="3" height="44" fill="#4a3a30"/><rect x="38" y="12" width="1.6" height="34" fill="#3a3430"/><rect x="34" y="12" width="10" height="1.5" fill="#3a3430"/><path d="M55,0 L169,12" stroke="#5a5a5a" stroke-width="0.5"/><path d="M128,0 H169 V62 H124 C124,40 126,20 128,0 Z" fill="#3f4a40"/><path d="M106,2 C112,14 116,26 120,46 L120,60 H96 C98,40 102,20 106,2 Z" fill="#4c574a"/><path d="M90,18 C94,28 98,40 98,56 H80 C82,40 86,28 90,18 Z" fill="#55604f"/><rect x="158" y="10" width="2.5" height="52" fill="#4a3a30"/><rect x="-1.0" y="60" width="14" height="70" rx="3" fill="#6a7a86"/><ellipse cx="6" cy="52" rx="4" ry="5" fill="#8e7264"/><ellipse cx="6" cy="49" rx="4.2" ry="3" fill="#2a2422"/><rect x="16.0" y="58" width="12" height="34" rx="3" fill="#222222"/><ellipse cx="22" cy="48" rx="4" ry="5" fill="#8e7264"/><ellipse cx="22" cy="45" rx="4.2" ry="3" fill="#2a2422"/><rect x="37.0" y="56" width="14" height="32" rx="3" fill="#2a2a2a"/><ellipse cx="44" cy="48" rx="4" ry="5" fill="#8e7264"/><ellipse cx="44" cy="45" rx="4.2" ry="3" fill="#2a2422"/><rect x="29.0" y="62" width="10" height="28" rx="3" fill="#2a2c30"/><ellipse cx="34" cy="54" rx="4" ry="5" fill="#8e7264"/><ellipse cx="34" cy="51" rx="4.2" ry="3" fill="#2a2422"/><rect x="65.0" y="60" width="14" height="32" rx="3" fill="#b0a2a6"/><ellipse cx="72" cy="52" rx="4" ry="5" fill="#8e7264"/><ellipse cx="72" cy="49" rx="4.2" ry="3" fill="#2a2422"/><rect x="89.0" y="54" width="14" height="40" rx="3" fill="#2a2c34"/><ellipse cx="96" cy="46" rx="4" ry="5" fill="#8e7264"/><ellipse cx="96" cy="43" rx="4.2" ry="3" fill="#2a2422"/><rect x="104.0" y="56" width="12" height="40" rx="3" fill="#8a5a3a"/><ellipse cx="110" cy="48" rx="4" ry="5" fill="#8e7264"/><ellipse cx="110" cy="45" rx="4.2" ry="3" fill="#2a2422"/><rect x="82.0" y="54" width="12" height="36" rx="3" fill="#96989a"/><ellipse cx="88" cy="40" rx="4" ry="5" fill="#8e7264"/><ellipse cx="88" cy="37" rx="4.2" ry="3" fill="#2a2422"/><rect x="117.0" y="58" width="14" height="40" rx="3" fill="#2a2a2a"/><ellipse cx="124" cy="48" rx="4" ry="5" fill="#8e7264"/><ellipse cx="124" cy="45" rx="4.2" ry="3" fill="#2a2422"/><rect x="125.0" y="52" width="10" height="18" rx="3" fill="#2a3a4a"/><ellipse cx="130" cy="44" rx="4" ry="5" fill="#8e7264"/><ellipse cx="130" cy="41" rx="4.2" ry="3" fill="#2a2422"/><rect x="142.0" y="56" width="16" height="64" rx="3" fill="#5e6e6e"/><ellipse cx="150" cy="46" rx="4" ry="5" fill="#8e7264"/><ellipse cx="150" cy="43" rx="4.2" ry="3" fill="#2a2422"/><rect x="156.0" y="54" width="12" height="26" rx="3" fill="#b8b8b8"/><ellipse cx="162" cy="44" rx="4" ry="5" fill="#8e7264"/><ellipse cx="162" cy="41" rx="4.2" ry="3" fill="#2a2422"/><rect x="158.0" y="72" width="10" height="53" rx="3" fill="#222222"/><ellipse cx="163" cy="64" rx="4" ry="5" fill="#8e7264"/><ellipse cx="163" cy="61" rx="4.2" ry="3" fill="#2a2422"/><rect x="132.0" y="70" width="16" height="26" rx="3" fill="#c4c4c4"/><ellipse cx="140" cy="52" rx="4" ry="5" fill="#8e7264"/><ellipse cx="140" cy="49" rx="4.2" ry="3" fill="#2a2422"/><rect x="112.0" y="70" width="12" height="26" rx="3" fill="#3e6080"/><ellipse cx="118" cy="56" rx="4" ry="5" fill="#8e7264"/><ellipse cx="118" cy="53" rx="4.2" ry="3" fill="#2a2422"/><rect x="50.0" y="62" width="16" height="34" rx="3" fill="#1e1e1e"/><ellipse cx="58" cy="52" rx="4" ry="5" fill="#8e7264"/><ellipse cx="58" cy="49" rx="4.2" ry="3" fill="#2a2422"/><rect x="11.0" y="70" width="14" height="30" rx="3" fill="#1e1e1e"/><ellipse cx="18" cy="62" rx="4" ry="5" fill="#8e7264"/><ellipse cx="18" cy="59" rx="4.2" ry="3" fill="#2a2422"/><rect x="0" y="96" width="169" height="36" fill="#8a8888"/><rect x="2" y="96" width="10" height="34" rx="1.5" fill="#6a5040"/><rect x="14" y="92" width="12" height="10" rx="1.5" fill="#1e1e1e"/><rect x="15" y="102" width="4" height="28" rx="1.5" fill="#8a6a5a"/><rect x="21" y="102" width="4" height="28" rx="1.5" fill="#8a6a5a"/><rect x="24" y="100" width="24" height="14" rx="1.5" fill="#b0aaaa"/><rect x="24" y="112" width="28" height="18" rx="1.5" fill="#8a9aa8"/><rect x="40" y="90" width="16" height="10" rx="1.5" fill="#1e1e1e"/><rect x="42" y="100" width="4" height="30" rx="1.5" fill="#8a6a5a"/><rect x="50" y="100" width="4" height="30" rx="1.5" fill="#8a6a5a"/><rect x="58" y="90" width="6" height="38" rx="1.5" fill="#1e2028"/><rect x="65" y="90" width="6" height="38" rx="1.5" fill="#1e2028"/><rect x="70" y="88" width="30" height="24" rx="1.5" fill="#b4b8bc"/><rect x="70" y="110" width="32" height="20" rx="1.5" fill="#1e1e1e"/><rect x="100" y="88" width="18" height="12" rx="1.5" fill="#4a6a88"/><rect x="103" y="100" width="4" height="30" rx="1.5" fill="#8a6a5a"/><rect x="111" y="100" width="4" height="30" rx="1.5" fill="#8a6a5a"/><rect x="118" y="90" width="8" height="40" rx="1.5" fill="#5a5a5a"/><rect x="128" y="92" width="18" height="14" rx="1.5" fill="#1e1e1e"/><rect x="131" y="106" width="4" height="24" rx="1.5" fill="#8a6a5a"/><rect x="139" y="106" width="4" height="24" rx="1.5" fill="#8a6a5a"/><rect x="146" y="92" width="10" height="38" rx="1.5" fill="#3a3a3a"/><rect x="158" y="90" width="11" height="40" rx="1.5" fill="#2a3a4a"/><rect x="0" y="131" width="169" height="38" fill="#858585"/><rect x="0" y="128" width="169" height="4" fill="#5e5a58"/><path d="M0,160 H169" stroke="#747474" stroke-width="1"/></g></svg></div>
<div id="img3" class="a" style="left:1177px;top:235px;width:84px;height:169px;background:#2a2624;overflow:hidden"><svg width="84" height="169" viewBox="0 0 84 169"><defs><filter id="b3" x="0" y="0" width="1" height="1"><feGaussianBlur stdDeviation="0.8"/></filter></defs><g filter="url(#b3)"><rect width="84" height="169" fill="#23201e"/><rect width="84" height="12" fill="#6a6a6a"/><rect y="12" width="84" height="54" fill="#6e5234"/><rect x="36" y="36" width="14" height="30" rx="5" fill="#8a8a8a"/><ellipse cx="43" cy="40" rx="5" ry="6" fill="#7a5a48"/><rect x="62" y="36" width="22" height="36" rx="5" fill="#1e1e1e"/><ellipse cx="73" cy="33" rx="5" ry="6" fill="#7a5a48"/><line x1="16" y1="38" x2="4" y2="66" stroke="#1a1a1a" stroke-width="1.5"/><rect x="0" y="56" width="28" height="30" fill="#5a5e66"/><rect x="42" y="58" width="32" height="40" rx="6" fill="#59616c"/><ellipse cx="58" cy="58" rx="7" ry="8" fill="#3a3230"/><ellipse cx="24" cy="48" rx="9" ry="10" fill="#3a3230"/><rect x="0" y="78" width="50" height="91" rx="6" fill="#1f1d1c"/><ellipse cx="30" cy="66" rx="8" ry="10" fill="#3a2e28"/><rect x="34" y="92" width="50" height="77" rx="6" fill="#1c1b1b"/><rect x="28" y="100" width="12" height="16" rx="3" fill="#a6a6a6"/><rect x="56" y="78" width="24" height="9" rx="3" fill="#6a4420"/><ellipse cx="76" cy="78" rx="8" ry="22" fill="#1c1b1b"/><rect x="0" y="118" width="7" height="51" fill="#2a3a4a"/><ellipse cx="50" cy="130" rx="7" ry="5" fill="#6a5044"/><rect x="70" y="134" width="14" height="10" fill="#2a3a4a"/></g></svg></div>
<div class="t" style="left:809px;top:417px;font-size:16px;font-weight:bold;color:#58616b;letter-spacing:0.26px">Mauris ac lectus in ···</div>
<div class="t" style="left:992px;top:417px;font-size:16px;font-weight:bold;color:#58616b;letter-spacing:0.26px">Mauris ac lectus in ···</div>
<div class="t" style="left:1176px;top:417px;font-size:16px;font-weight:bold;color:#58616b;letter-spacing:0.26px">Mauris ac l</div>
<div class="t" style="left:810px;top:447px;font-size:13px;color:#4a4a4a;letter-spacing:-0.12px">2020.08.03 16:03:38</div>
<div class="t" style="left:993px;top:447px;font-size:13px;color:#4a4a4a;letter-spacing:-0.12px">2020.08.03 16:03:38</div>
<div class="t" style="left:1177px;top:447px;font-size:13px;color:#4a4a4a;letter-spacing:-0.12px">2020.08.03 16:</div>

<!-- footer -->
<div class="ln" style="left:3px;top:536px;width:1258px;background:#a8a8a8"></div>
<div class="t" style="left:224px;top:616px;font-size:16px;color:#2e2e2e;letter-spacing:0.24px">ABC Company | 02-123-4567 | info@abccompany.com</div>
<div class="t" style="left:224px;top:639px;font-size:16px;color:#2e2e2e;letter-spacing:0.32px">Copyright(c) 2020 ABC company All rights reserved</div>
<svg class="a" style="left:1156px;top:609px" width="100" height="42">
  <defs><radialGradient id="ig" cx="0.3" cy="1.05" r="1.1"><stop offset="0" stop-color="#c9a34e"/><stop offset="0.22" stop-color="#c47a40"/><stop offset="0.48" stop-color="#b24652"/><stop offset="0.72" stop-color="#9a2a72"/><stop offset="1" stop-color="#6e3a86"/></radialGradient></defs>
  <circle cx="21" cy="21" r="20" fill="url(#ig)"/>
  <rect x="9.4" y="9.4" width="23.2" height="23.2" rx="6" fill="none" stroke="#bdbdbd" stroke-width="2.8"/>
  <circle cx="21" cy="21" r="6" fill="none" stroke="#bdbdbd" stroke-width="2.5"/>
  <circle cx="27.9" cy="13.9" r="1.6" fill="#bdbdbd"/>
  <circle cx="76" cy="21" r="20" fill="#1a74b4"/>
  <path transform="translate(76.5,21.8) scale(1.24) translate(-77.15,-22.5)" d="M87,16.2 C86.3,16.5 85.5,16.8 84.7,16.9 C85.5,16.4 86.1,15.6 86.4,14.8 C85.6,15.3 84.8,15.6 83.8,15.8 C83.1,15 82,14.5 80.8,14.5 C78.6,14.5 76.8,16.3 76.8,18.5 C76.8,18.8 76.8,19.1 76.9,19.4 C73.5,19.2 70.6,17.6 68.6,15.2 C68.3,15.8 68.1,16.5 68.1,17.2 C68.1,18.6 68.8,19.8 69.9,20.6 C69.2,20.6 68.6,20.4 68.1,20.1 C68.1,22.1 69.5,23.7 71.3,24.1 C70.7,24.3 70.1,24.3 69.5,24.2 C70,25.8 71.5,27 73.3,27 C71.9,28.1 70.2,28.8 68.3,28.8 C68,28.8 67.6,28.8 67.3,28.7 C69.1,29.9 71.2,30.5 73.4,30.5 C80.8,30.5 84.9,24.4 84.9,19 L84.9,18.5 C85.7,17.9 86.4,17.1 87,16.2 Z" fill="#bdbdbd"/>
</svg>

<!-- right panel -->
<div class="a" style="left:1260px;top:62px;width:321px;height:889px;background:#f4f4f4;border-left:1px solid #b9b9b9;border-right:1px solid #fff;border-bottom:1px solid #fff;box-shadow:inset 1px 0 0 #f8f8f8"></div>
<div class="a" style="left:1262px;top:62px;width:318px;height:87px;background:#fff;border-bottom:1px solid #d4d4d4"></div>
<div class="t" style="left:1272px;top:78px;font-size:15px;color:#333;letter-spacing:0px">블로그형 최신글 상세 설정</div>
<svg class="a" style="left:1545px;top:77px" width="18" height="18"><path d="M3.5,3.2 L15.5,14.6 M15.5,3.2 L3.5,14.6" stroke="#222" stroke-width="2.8" stroke-linecap="round"/></svg>
<div class="a" style="left:1262px;top:108px;width:318px;height:1px;background:#d8d8d8"></div>
<div class="a" style="left:1262px;top:109px;width:68px;height:39px;background:#2668ee"></div>
<div class="a" style="left:1330px;top:109px;width:1px;height:39px;background:#e0e0e0"></div>
<div class="a" style="left:1414px;top:109px;width:1px;height:39px;background:#e0e0e0"></div>
<div class="a" style="left:1511px;top:109px;width:1px;height:39px;background:#e0e0e0"></div>
<div class="t" style="left:1283px;top:121px;font-size:14px;color:#fff;letter-spacing:-0.5px">내용</div>
<div class="t" style="left:1353px;top:121px;font-size:14px;color:#333;letter-spacing:-0.5px">디자인</div>
<div class="t" style="left:1436px;top:121px;font-size:14px;color:#333;letter-spacing:-0.5px">레이아웃</div>
<div class="t" style="left:1532px;top:121px;font-size:14px;color:#333;letter-spacing:-0.5px">배경</div>

<div class="ph" style="top:173px">게시판</div>
<div class="lb" style="left:1277px;top:208px">게시판 연동</div>
<div class="sel" style="left:1410px;top:205px;width:105px;height:26px"><span>게시판 76</span><i class="arr" style="left:83px;top:9px"></i></div>
<div class="lb" style="left:1277px;top:244px">페이지당 글 수</div>
<div class="sel" style="left:1410px;top:242px;width:53px;height:26px"><span>3</span><i class="arr" style="left:31px;top:9px"></i></div>
<div class="pl" style="top:286px"></div>

<div class="ph" style="top:306px">게시판 요소</div>
<div class="cb" style="left:1277px;top:339px"><svg width="13" height="13"><path d="M3,6.8 L5.5,9.3 L10.2,3.8" fill="none" stroke="#fff" stroke-width="2"/></svg></div>
<div class="lb" style="left:1297px;top:338px">게시판명</div>
<div class="cb" style="left:1277px;top:364px"><svg width="13" height="13"><path d="M3,6.8 L5.5,9.3 L10.2,3.8" fill="none" stroke="#fff" stroke-width="2"/></svg></div>
<div class="lb" style="left:1297px;top:363px">더보기</div>
<div class="lb" style="left:1277px;top:392px">더보기 링크</div>
<svg class="a" style="left:1353px;top:392px" width="15" height="15"><circle cx="7" cy="7.3" r="6.2" fill="none" stroke="#555" stroke-width="1.2"/><text x="7" y="11" font-size="10" text-anchor="middle" fill="#555" font-family="Liberation Sans" font-weight="bold">?</text></svg>
<div class="sel" style="left:1410px;top:388px;width:157px;height:26px"><span>페이지를 선택하세요</span><i class="arr" style="left:135px;top:9px"></i></div>
<div class="pl" style="top:434px"></div>

<div class="ph" style="top:454px">노출 항목</div>
<div class="cb" style="left:1277px;top:487px;background:#cdcdcd"><svg width="13" height="13"><path d="M3,6.8 L5.5,9.3 L10.2,3.8" fill="none" stroke="#eee" stroke-width="2"/></svg></div>
<div class="lb" style="left:1297px;top:486px">제목</div>
<div class="cb" style="left:1277px;top:512px;background:#fff;border:1px solid #767676"></div>
<div class="lb" style="left:1297px;top:511px">작성자</div>
<div class="cb" style="left:1277px;top:538px"><svg width="13" height="13"><path d="M3,6.8 L5.5,9.3 L10.2,3.8" fill="none" stroke="#fff" stroke-width="2"/></svg></div>
<div class="lb" style="left:1297px;top:537px">작성일</div>
<div class="pl" style="top:571px"></div>

<div class="ph" style="top:591px">정렬</div>
<div class="lb" style="left:1277px;top:626px">게시글</div>
<div class="sel" style="left:1410px;top:624px;width:76px;height:26px"><span>최신순</span><i class="arr" style="left:54px;top:9px"></i></div>
<div class="pl" style="top:668px"></div>

<div class="a" style="left:1262px;top:896px;width:318px;height:1px;background:#d8d8d8"></div>
<div class="a" style="left:1277px;top:907px;width:92px;height:31px;background:#4a7ded;border-radius:3px"></div>
<div class="t" style="left:1297px;top:915px;font-size:13px;color:#fff">적용하기</div>
<div class="t" style="left:1429px;top:914px;font-size:15px;font-weight:bold;color:#aaa;letter-spacing:-0.17px">section_77_latest_2</div>
<div class="a" style="left:3px;top:3px;width:1px;height:948px;background:#77726e"></div>
<div class="a" style="left:1581px;top:3px;width:1px;height:948px;background:#6e6e6e"></div>
</body></html>
